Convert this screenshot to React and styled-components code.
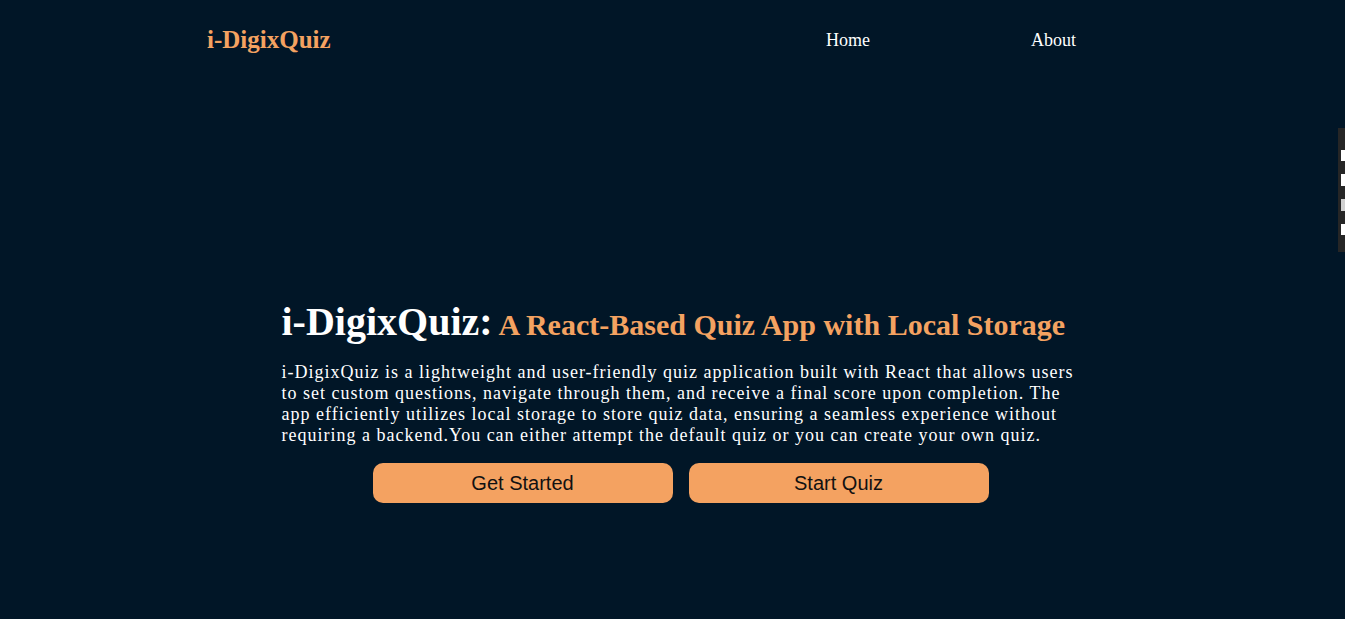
import React from "react";
import styled, { createGlobalStyle } from "styled-components";

const GlobalStyle = createGlobalStyle`
  html, body {
    background: #011627;
  }
  body {
    margin: 8px;
    font-family: "Liberation Serif", "Times New Roman", serif;
    min-height: 603px;
  }
`;

const Page = styled.div`
  width: 100vw;
  min-height: 603px;
  color: #ffffff;
  display: flex;
  flex-direction: column;
`;

const NavBar = styled.header`
  display: flex;
  align-items: center;
  height: 80px;
  margin-top: -8px;
  padding: 0 0 0 199px;
`;

const Logo = styled.div`
  font-size: 25px;
  font-weight: bold;
  color: #f4a261;
  flex: 1;
`;

const NavLinks = styled.nav`
  display: flex;
  gap: 161px;
  margin-right: 277px;
`;

const NavLink = styled.a`
  color: #ffffff;
  font-size: 18px;
  text-decoration: none;
  cursor: pointer;
`;

const Hero = styled.main`
  width: 798px;
  margin: 0 auto;
  padding-top: 218px;
  display: flex;
  flex-direction: column;
`;

const Title = styled.h1`
  margin: 0;
  font-size: 40px;
  font-weight: bold;
  color: #ffffff;
`;

const Subtitle = styled.span`
  font-size: 30px;
  color: #f4a261;
`;

const Description = styled.p`
  margin: 17px 0 0;
  font-size: 18px;
  letter-spacing: 1px;
  color: #ffffff;
`;

const ButtonRow = styled.div`
  display: flex;
  justify-content: center;
  gap: 16px;
  margin-top: 17px;
`;

const ActionButton = styled.button`
  width: 300px;
  height: 40px;
  border: none;
  border-radius: 10px;
  background: #f4a261;
  color: #111111;
  font-family: "Liberation Sans", Arial, sans-serif;
  font-size: 20px;
  cursor: pointer;
`;

const SideWidget = styled.div`
  position: fixed;
  right: 0;
  top: 128px;
  width: 7px;
  height: 124px;
  background: #262626;
  display: flex;
  flex-direction: column;
  align-items: flex-end;
  padding-top: 22px;
  gap: 13px;
  box-sizing: border-box;
`;

const WidgetMark = styled.span`
  display: block;
  width: 4px;
  height: ${(p) => p.$h}px;
  background: ${(p) => p.$c};
`;

export default function App() {
  return (
    <>
      <GlobalStyle />
      <Page>
        <NavBar>
          <Logo>i-DigixQuiz</Logo>
          <NavLinks>
            <NavLink>Home</NavLink>
            <NavLink>About</NavLink>
          </NavLinks>
        </NavBar>
        <Hero>
          <Title>
            i-DigixQuiz:<Subtitle> A React-Based Quiz App with Local Storage</Subtitle>
          </Title>
          <Description>
            i-DigixQuiz is a lightweight and user-friendly quiz application built with React that allows users
            to set custom questions, navigate through them, and receive a final score upon completion. The
            app efficiently utilizes local storage to store quiz data, ensuring a seamless experience without
            requiring a backend.You can either attempt the default quiz or you can create your own quiz.
          </Description>
          <ButtonRow>
            <ActionButton>Get Started</ActionButton>
            <ActionButton>Start Quiz</ActionButton>
          </ButtonRow>
        </Hero>
        <SideWidget>
          <WidgetMark $h={11} $c="#ffffff" />
          <WidgetMark $h={12} $c="#ffffff" />
          <WidgetMark $h={12} $c="#d0d0d0" />
          <WidgetMark $h={11} $c="#ffffff" />
        </SideWidget>
      </Page>
    </>
  );
}
